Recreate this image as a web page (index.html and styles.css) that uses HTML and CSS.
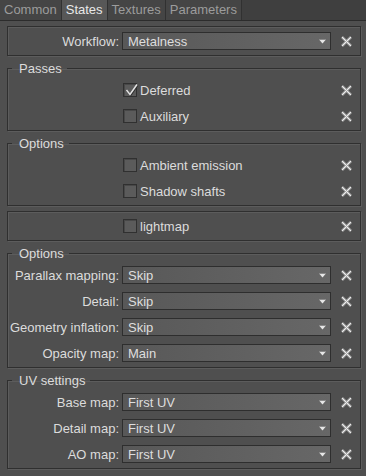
FILE: index.html
```html
<!DOCTYPE html>
<html>
<head>
<meta charset="utf-8">
<link rel="stylesheet" href="styles.css">
</head>
<body>
<svg class="defs" width="0" height="0" aria-hidden="true">
  <defs>
    <symbol id="xicon" viewBox="0 0 11 11">
      <path d="M1 1 L10 10 M10 1 L1 10" stroke="#a9a9a9" stroke-width="2.6" fill="none"/>
      <path d="M1 1 L10 10 M10 1 L1 10" stroke="#ededed" stroke-width="1" fill="none"/>
    </symbol>
    <symbol id="arrow" viewBox="0 0 7 5">
      <rect x="0" y="0" width="7" height="1" fill="#8a8a8a"/>
      <polygon points="0.5,1 6.5,1 3.5,4.5" fill="#e6e6e6"/>
    </symbol>
  </defs>
</svg>

<div class="tabs">
  <div class="tab">Common</div>
  <div class="tab active">States</div>
  <div class="tab">Textures</div>
  <div class="tab">Parameters</div>
</div>

<div class="pane">
  <div class="box">
    <div class="row">
      <span class="label">Workflow:</span>
      <div class="combo"><span>Metalness</span><svg class="arrow"><use href="#arrow"/></svg></div>
      <svg class="x" viewBox="0 0 11 11"><use href="#xicon"/></svg>
    </div>
  </div>

  <fieldset class="group">
    <legend>Passes</legend>
    <div class="row">
      <span class="label"></span>
      <div class="check"><span class="cb"><svg class="tick" viewBox="0 0 14 14"><path d="M2.5 7 L6 11.5 L13 1.5" stroke="#2e2e2e" stroke-width="1.6" fill="none" transform="translate(0.6 0.8)"/><path d="M2.5 7 L6 11.5 L13 1.5" stroke="#e4e4e4" stroke-width="1.5" fill="none"/></svg></span>Deferred</div>
      <svg class="x" viewBox="0 0 11 11"><use href="#xicon"/></svg>
    </div>
    <div class="row">
      <span class="label"></span>
      <div class="check"><span class="cb"></span>Auxiliary</div>
      <svg class="x" viewBox="0 0 11 11"><use href="#xicon"/></svg>
    </div>
  </fieldset>

  <fieldset class="group">
    <legend>Options</legend>
    <div class="row">
      <span class="label"></span>
      <div class="check"><span class="cb"></span>Ambient emission</div>
      <svg class="x" viewBox="0 0 11 11"><use href="#xicon"/></svg>
    </div>
    <div class="row">
      <span class="label"></span>
      <div class="check"><span class="cb"></span>Shadow shafts</div>
      <svg class="x" viewBox="0 0 11 11"><use href="#xicon"/></svg>
    </div>
  </fieldset>

  <div class="box">
    <div class="row">
      <span class="label"></span>
      <div class="check"><span class="cb"></span>lightmap</div>
      <svg class="x" viewBox="0 0 11 11"><use href="#xicon"/></svg>
    </div>
  </div>

  <fieldset class="group">
    <legend>Options</legend>
    <div class="row">
      <span class="label">Parallax mapping:</span>
      <div class="combo"><span>Skip</span><svg class="arrow"><use href="#arrow"/></svg></div>
      <svg class="x" viewBox="0 0 11 11"><use href="#xicon"/></svg>
    </div>
    <div class="row">
      <span class="label">Detail:</span>
      <div class="combo"><span>Skip</span><svg class="arrow"><use href="#arrow"/></svg></div>
      <svg class="x" viewBox="0 0 11 11"><use href="#xicon"/></svg>
    </div>
    <div class="row">
      <span class="label">Geometry inflation:</span>
      <div class="combo"><span>Skip</span><svg class="arrow"><use href="#arrow"/></svg></div>
      <svg class="x" viewBox="0 0 11 11"><use href="#xicon"/></svg>
    </div>
    <div class="row">
      <span class="label">Opacity map:</span>
      <div class="combo"><span>Main</span><svg class="arrow"><use href="#arrow"/></svg></div>
      <svg class="x" viewBox="0 0 11 11"><use href="#xicon"/></svg>
    </div>
  </fieldset>

  <fieldset class="group">
    <legend>UV settings</legend>
    <div class="row">
      <span class="label">Base map:</span>
      <div class="combo"><span>First UV</span><svg class="arrow"><use href="#arrow"/></svg></div>
      <svg class="x" viewBox="0 0 11 11"><use href="#xicon"/></svg>
    </div>
    <div class="row">
      <span class="label">Detail map:</span>
      <div class="combo"><span>First UV</span><svg class="arrow"><use href="#arrow"/></svg></div>
      <svg class="x" viewBox="0 0 11 11"><use href="#xicon"/></svg>
    </div>
    <div class="row">
      <span class="label">AO map:</span>
      <div class="combo"><span>First UV</span><svg class="arrow"><use href="#arrow"/></svg></div>
      <svg class="x" viewBox="0 0 11 11"><use href="#xicon"/></svg>
    </div>
  </fieldset>
</div>
</body>
</html>
```

FILE: styles.css
```css
* { box-sizing: border-box; }
html, body { margin: 0; padding: 0; }
body {
  width: 366px;
  height: 476px;
  overflow: hidden;
  background: #4f4f4f;
  font-family: "Liberation Sans", Arial, sans-serif;
  font-size: 13px;
  color: #dcdcdc;
}
.defs { position: absolute; width: 0; height: 0; }

.tabs {
  display: flex;
  height: 20px;
  background: #3f3f3f;
}
.tab {
  padding: 0 4px;
  line-height: 20px;
  color: #9c9c9c;
  background: #454545;
  border-right: 1px solid #313131;
}
.tab.active {
  background: #575757;
  color: #e8e8e8;
}

.pane {
  border-top: 1px solid #2c2c2c;
  padding: 5px 5px 0 7px;
  display: flex;
  flex-direction: column;
  gap: 5px;
}

.box, .group {
  margin: 0;
  border: 1px solid #2f2f2f;
  box-shadow: 1px 1px 0 #5c5c5c, inset 1px 1px 0 #5c5c5c;
  min-width: 0;
}
.box { padding: 1px 0; }
.group { padding: 1px 0; }
.group legend {
  margin-left: 4px;
  padding: 0 5px 0 7px;
  line-height: 15px;
  color: #dcdcdc;
}

.row {
  display: grid;
  grid-template-columns: 111px 209px 1fr;
  column-gap: 3px;
  align-items: center;
  height: 26px;
}
.label {
  text-align: right;
  white-space: nowrap;
}
.combo {
  height: 18px;
  border: 1px solid #2e2e2e;
  background: linear-gradient(to right, #585858, #676767);
  display: flex;
  align-items: center;
  justify-content: space-between;
  padding: 0 4px 0 5px;
  color: #dedede;
}
.arrow { width: 7px; height: 5px; margin-top: 1px; }
.x {
  width: 11px;
  height: 11px;
  justify-self: center;
  margin-left: -2px;
}
.check {
  display: flex;
  align-items: center;
  gap: 3px;
  padding-left: 1px;
  white-space: nowrap;
}
.cb {
  width: 14px;
  height: 14px;
  border: 1px solid #303030;
  background: #5b5b5b;
  box-shadow: inset 1px 1px 0 #484848;
  position: relative;
  flex: none;
}
.tick {
  position: absolute;
  left: 0;
  top: -1px;
  width: 14px;
  height: 14px;
  overflow: visible;
}
```
